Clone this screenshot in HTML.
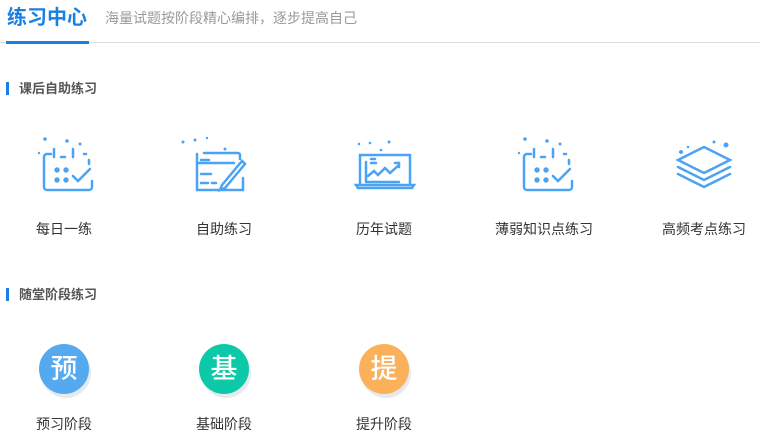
<!DOCTYPE html>
<html><head><meta charset="utf-8"><style>
*{margin:0;padding:0;box-sizing:border-box}
body{width:760px;height:439px;background:#fff;font-family:"Liberation Sans","Noto Sans CJK SC",sans-serif;position:relative;overflow:hidden;color:#333}
.abs{position:absolute}
.t{left:7px;top:5px;font-size:20px;font-weight:bold;color:#1a7fe0;line-height:26px}
.sub{left:105px;top:8px;font-size:14px;color:#999;line-height:20px}
.line{left:0;top:42px;width:760px;height:1px;background:#ddd}
.ul{left:6px;top:41px;width:83px;height:3px;background:#1a7fe0}
.sec{left:6px;font-size:13px;font-weight:bold;color:#555;line-height:14px;padding-left:13px}
.sec:before{content:"";position:absolute;left:0;top:0;width:3px;height:13px;background:#1a7fe0}
.lab{font-size:14px;color:#333;width:160px;text-align:center;line-height:16px}
.c{width:50px;height:50px;border-radius:50%;color:#fff;font-size:27px;font-weight:500;text-align:center;line-height:50px;box-shadow:2px 4px 0 #e6e9ee}
</style></head><body>
<div class="abs t">练习中心</div>
<div class="abs sub">海量试题按阶段精心编排，逐步提高自己</div>
<div class="abs line"></div>
<div class="abs ul"></div>
<div class="abs sec" style="top:82px">课后自助练习</div>
<div class="abs sec" style="top:288px">随堂阶段练习</div>

<svg class="abs" style="left:0;top:130px" width="760" height="70" fill="none" stroke="#4aa3f5" stroke-width="2.5" stroke-linecap="round">
<g id="cal" transform="translate(64,0)">
<circle cx="-19" cy="9" r="1.8" fill="#4aa3f5" stroke="none"/><circle cx="3" cy="11" r="1.8" fill="#4aa3f5" stroke="none"/><circle cx="16" cy="14" r="1.5" fill="#4aa3f5" stroke="none"/><circle cx="-25" cy="23" r="1.2" fill="#4aa3f5" stroke="none"/>
<path d="M-13 24h-4a3 3 0 0 0-3 3v30a3 3 0 0 0 3 3h42a3 3 0 0 0 3-3v-6M22 24h-2M-3 27h4M-10 19v8M9 19v8M25 30v4"/>
<circle cx="-7" cy="40" r="2.7" fill="#4aa3f5" stroke="none"/><circle cx="2" cy="40" r="2.7" fill="#4aa3f5" stroke="none"/><circle cx="-7" cy="50" r="2.7" fill="#4aa3f5" stroke="none"/><circle cx="2" cy="50" r="2.7" fill="#4aa3f5" stroke="none"/>
<path d="M9 46l5 5 12-12"/>
</g>
<use href="#cal" x="480"/>
<g transform="translate(224,0)">
<circle cx="-41" cy="12" r="1.5" fill="#4aa3f5" stroke="none"/><circle cx="-29" cy="10" r="1.5" fill="#4aa3f5" stroke="none"/><circle cx="-17" cy="8" r="1.2" fill="#4aa3f5" stroke="none"/><circle cx="1" cy="19" r="1.5" fill="#4aa3f5" stroke="none"/>
<path d="M-20 23h34a2 2 0 0 1 2 2v4M-27 33h37M-27 24v36h46v-12M-23 30h8M-23 44h10M-23 53h7M-12 53h4M-2 55l20-24 3 3-20 24-5 2z"/>
</g>
<g transform="translate(384,0)">
<circle cx="-25" cy="14" r="1.3" fill="#4aa3f5" stroke="none"/><circle cx="-14" cy="13" r="1.3" fill="#4aa3f5" stroke="none"/><circle cx="-3" cy="20" r="1.3" fill="#4aa3f5" stroke="none"/><circle cx="5" cy="12" r="1.5" fill="#4aa3f5" stroke="none"/>
<path d="M-24 54v-29h50v29M-28 55h58l-2 3h-54zM-18 52v-20M-18 52h33M-13 29h4M-13 33h5M-16 46l6-5 4 4 7-7 5 5 9-8M11 33h4v4"/>
</g>
<g transform="translate(704,0)">
<circle cx="-23" cy="22" r="2" fill="#4aa3f5" stroke="none"/><circle cx="-16" cy="17" r="1.2" fill="#4aa3f5" stroke="none"/><circle cx="10" cy="12" r="1.5" fill="#4aa3f5" stroke="none"/><circle cx="22" cy="15" r="2.5" fill="#4aa3f5" stroke="none"/>
<path d="M0 17l26 13-26 13-26-13zM-26 37l26 13 26-13M-26 44l26 13 26-13"/>
</g>
</svg>

<div class="abs lab" style="left:-16px;top:221px">每日一练</div>
<div class="abs lab" style="left:144px;top:221px">自助练习</div>
<div class="abs lab" style="left:304px;top:221px">历年试题</div>
<div class="abs lab" style="left:464px;top:221px">薄弱知识点练习</div>
<div class="abs lab" style="left:624px;top:221px">高频考点练习</div>

<div class="abs c" style="left:39px;top:344px;background:#55aaef">预</div>
<div class="abs c" style="left:199px;top:344px;background:#0ec9a8">基</div>
<div class="abs c" style="left:359px;top:344px;background:#fbb05a">提</div>
<div class="abs lab" style="left:-16px;top:416px">预习阶段</div>
<div class="abs lab" style="left:144px;top:416px">基础阶段</div>
<div class="abs lab" style="left:304px;top:416px">提升阶段</div>
</body></html>
